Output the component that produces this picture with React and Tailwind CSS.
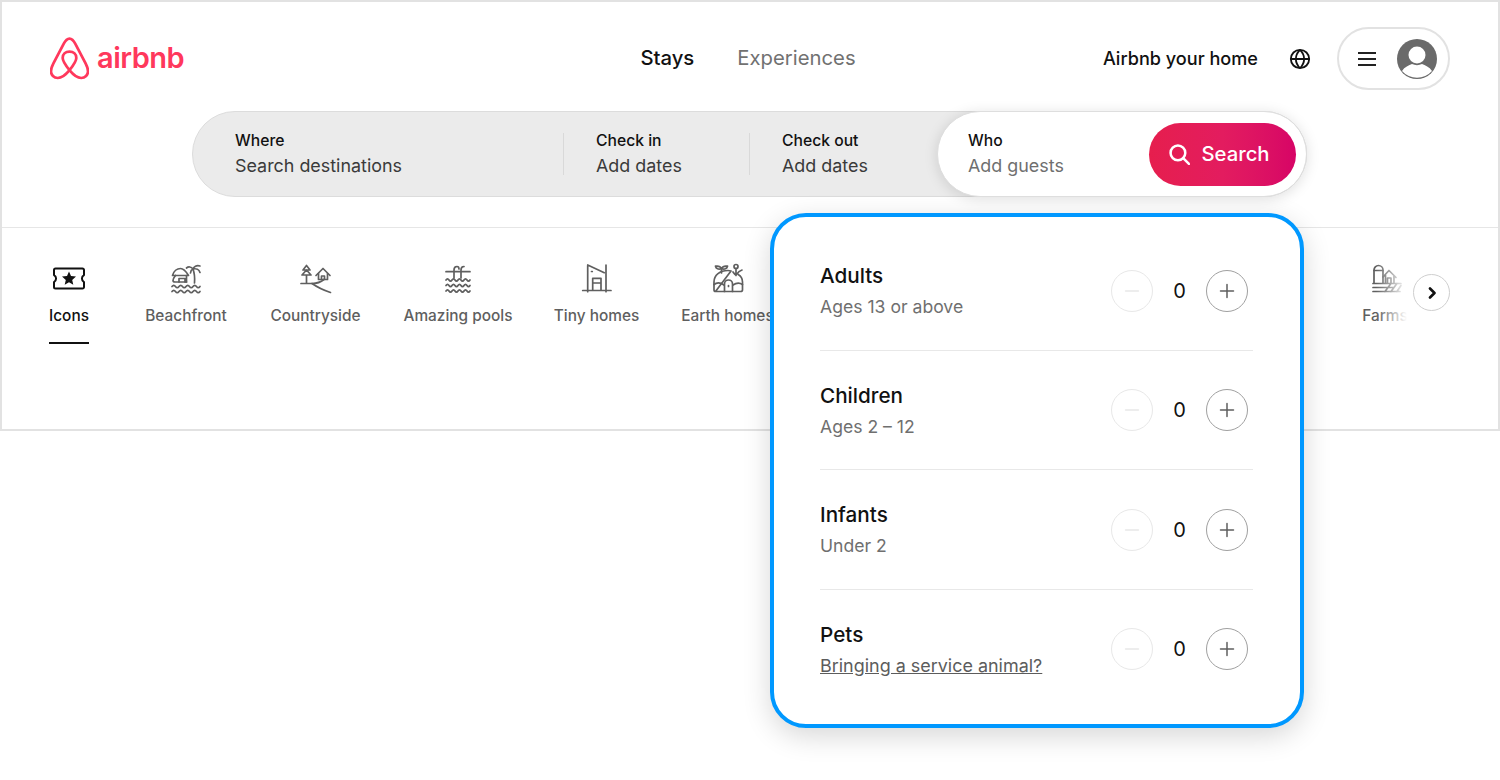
import React from "react";

const Svg = ({ children, className = "" }) => (
  <svg viewBox="0 0 32 32" fill="none" stroke="currentColor" strokeWidth="1.700" strokeLinecap="round" strokeLinejoin="round" className={`h-8 w-8 ${className}`}>
    {children}
  </svg>
);

const wave = (y, x0 = 2, n = 4, w = 7) => {
  let d = `M${x0} ${y}`;
  for (let i = 0; i < n; i++) d += ` q${w / 4} -2.400 ${w / 2} 0 t${w / 2} 0`;
  return d;
};

const Ticket = () => (
  <Svg>
    <path d="M2.500 5.500h27a1.500 1.500 0 0 1 1.500 1.500v5a4 4 0 0 0 0 7v5a1.500 1.500 0 0 1-1.500 1.500h-27A1.500 1.500 0 0 1 1 24v-5a4 4 0 0 0 0-7V7a1.500 1.500 0 0 1 1.500-1.500z" strokeWidth="2" />
    <path d="M16 8.500l2 4.600 5 .5-3.800 3.300 1.100 4.900-4.300-2.600-4.300 2.600 1.100-4.900-3.800-3.300 5-.5z" fill="currentColor" stroke="none" />
  </Svg>
);
const Beach = () => (
  <Svg>
    <path d="M2.500 12.500c1.200-4 4.500-7 8-7 2.500 0 5 2 8 7z" />
    <path d="M5.500 12.500c-1.300 2-2.500 3-2.500 5 0 1.200 1 1.500 2 1.500h11.500" />
    <path d="M9 19v-3.500h6V19M16.500 12.500V19" />
    <path d="M24.500 20c.4-5 .3-9-1.500-14" />
    <path d="M23 6c-1.800-2.400-4.600-2.600-6.500-1M23 6c.6-2.500 3.600-4 7-3M23 6c3-.8 6 .6 7 3.500M23 6c-1.300.6-2.400 2-2.500 4" />
    <path d={wave(23.500, 2, 4, 7)} />
    <path d={wave(28.500, 2, 4, 7)} />
  </Svg>
);
const Country = () => (
  <Svg>
    <path d="M6.500 2.500l-3.500 4.500h7zM6.500 7l-4.500 5h9zM6.500 12v8" />
    <path d="M16 12.500L23 5.500l7 7" />
    <path d="M18.500 10.500v6h9v-6M21.500 16.500v-3.500h3v3.500" />
    <path d="M1 20.500h11c4.500 0 9-1.500 12-4" />
    <path d="M12 20.500c5 3.500 11 6.500 18.500 9" />
  </Svg>
);
const Pool = () => (
  <Svg>
    <path d="M4 8.700h24" />
    <path d="M12 15V7c0-2 1.300-3.500 3-3.500M19 15V7c0-2 1.300-3.500 3-3.500M15 3.500c1.700 0 2 1 2 2.500" />
    <path d={wave(17, 4, 4, 6)} />
    <path d={wave(22.500, 4, 4, 6)} />
    <path d={wave(28, 4, 4, 6)} />
  </Svg>
);
const Tiny = () => (
  <Svg>
    <path d="M6.700 2v26.700M6.700 2l16.600 7.700M25 2v26.700M1.700 27.500H30" />
    <path d="M11.700 27V15.300H20V27M11.700 20H20" />
    <path d="M10.500 8.500h.8" />
  </Svg>
);
const Earth = () => (
  <Svg>
    <path d="M3.500 28.500h25c1 0 2-.8 2-1.800V19c0-3-1.700-6-4.300-7.500M19 8c-1-.3-2-.5-3-.5C8 7.500 2 12 2 19v7.700c0 1 .5 1.800 1.500 1.800z" />
    <path d="M2 21.500c3-2.500 6-2.500 10 .5M21 22c3.500-2.500 6-3 9.500-.5" />
    <path d="M12.500 28.500V21a4 4 0 0 1 8 0v7.500M16.500 22.500v1" />
    <path d="M9.500 10V5.500M9.500 5.500C8.500 3.500 6 2.800 3.500 3.200 4 5.500 6.500 7 9.500 5.500zM9.500 5.500c1-2 3.500-2.700 6-2.300-.5 2.300-3 3.800-6 2.300z" />
    <circle cx="24" cy="3.500" r="2" />
    <path d="M24 5.500v7M21 9c1 1.500 2 2.500 3 3M30 7c-2 .5-4 2-5.500 4.500" />
  </Svg>
);
const Farm = () => (
  <Svg className="ml-[4px]">
    <path d="M3 20V7c0-2.500 2-4.500 4.500-4.500S12 4.500 12 7v13" />
    <path d="M3 7.500h9M12 14l6-6.500 7 7M14.500 12v8M23 13v7M16.500 20v-5h3.500v5" />
    <path d="M2 20.500h28M2 24.500h20M2 28.500h27M14 28.500l6-8M20 28.500l6-8M26 28.500l4-6" />
  </Svg>
);

const categories = [
  { label: "Icons", Icon: Ticket, w: "w-[40px] mr-[13px]", active: true },
  { label: "Beachfront", Icon: Beach, w: "w-[83px]" },
  { label: "Countryside", Icon: Country, w: "w-[91px]" },
  { label: "Amazing pools", Icon: Pool, w: "w-[109px]" },
  { label: "Tiny homes", Icon: Tiny, w: "w-[83px]" },
  { label: "Earth homes", Icon: Earth, w: "w-[94px]" },
];

const Category = ({ label, Icon, w, active }) => (
  <div className={`flex shrink-0 flex-col items-center ${w} ${active ? "text-[#111111]" : "text-[#5f5f5f]"}`}>
    <Icon />
    <span className="mt-[11px] whitespace-nowrap text-[15.400px] font-medium leading-5">{label}</span>
    <span className={`mt-[16px] h-[2px] w-full ${active ? "bg-[#111111]" : "bg-transparent"}`} />
  </div>
);

const Segment = ({ label, value, width, pad, muted }) => (
  <div className={`flex flex-col justify-center ${width} ${pad}`}>
    <span className="text-[15.700px] font-medium leading-[22px] text-[#111111]">{label}</span>
    <span className={`mt-[1px] text-[17.900px] leading-[25px] ${muted ? "text-[#6f6f6f]" : "text-[#3a3a3a]"}`}>{value}</span>
  </div>
);

const Counter = () => (
  <div className="flex items-center pr-[5px]">
    <button className="flex h-[42px] w-[42px] items-center justify-center rounded-full border border-[#e8e8e8] bg-white">
      <svg viewBox="0 0 16 16" className="h-4 w-4" stroke="#e8e8e8" strokeWidth="1.500" strokeLinecap="round"><path d="M1.500 8h13" /></svg>
    </button>
    <span className="w-[53px] text-center text-[20px] leading-none text-[#111111]">0</span>
    <button className="flex h-[42px] w-[42px] items-center justify-center rounded-full border border-[#a0a0a0] bg-white">
      <svg viewBox="0 0 16 16" className="h-4 w-4" stroke="#5f5f5f" strokeWidth="1.500" strokeLinecap="round"><path d="M1.500 8h13M8 1.500v13" /></svg>
    </button>
  </div>
);

const guests = [
  { title: "Adults", sub: "Ages 13 or above" },
  { title: "Children", sub: "Ages 2 – 12" },
  { title: "Infants", sub: "Under 2" },
  { title: "Pets", sub: "Bringing a service animal?", link: true },
];

export default function App() {
  return (
    <div className="relative h-[780px] w-[1500px] overflow-hidden bg-white text-[#222222] [font-family:Inter,'Noto_Sans',sans-serif]">
      <div className="flex h-[431px] flex-col border-2 border-[#e2e2e2] bg-white">
        <header className="grid grid-cols-[1fr_auto_1fr] items-center pl-[48px] pr-[48px] pt-[25px]">
          <div className="flex items-center gap-[8px] text-[#ff385c]">
            <svg viewBox="0 0 40 44" className="h-[43px] w-[39px]" fill="none" stroke="currentColor" strokeWidth="2.800" strokeLinejoin="round">
              <path d="M20 34C24 39 28 42 32 42C36 42 39 39 39 35C39 32 38 30 36.500 27L26 7C24 3 22 1.500 20 1.500C18 1.500 16 3 14 7L3.500 27C2 30 1 32 1 35C1 39 4 42 8 42C12 42 16 39 20 34C24 29 27 25 27 21.500C27 17.500 24 15 20 15C16 15 13 17.500 13 21.500C13 25 16 29 20 34Z" />
            </svg>
            <span className="-mt-[2px] text-[29px] font-semibold leading-none tracking-[-0.5px]">airbnb</span>
          </div>
          <nav className="-ml-[4px] flex items-center gap-[43px] text-[20.300px]">
            <span className="font-medium text-[#111111]">Stays</span>
            <span className="text-[#717171]">Experiences</span>
          </nav>
          <div className="flex items-center justify-end">
            <span className="text-[18.100px] font-medium text-[#111111]">Airbnb your home</span>
            <svg viewBox="0 0 24 24" className="ml-[31px] h-[22px] w-[22px]" fill="none" stroke="#111111" strokeWidth="2">
              <circle cx="12" cy="12" r="10" />
              <path d="M2 12h20M12 2c-6 6-6 14 0 20M12 2c6 6 6 14 0 20" />
            </svg>
            <div className="ml-[26px] flex h-[63px] w-[113px] items-center rounded-full border-2 border-[#e2e2e2] pl-[19px]">
              <svg viewBox="0 0 18 14" className="h-[14px] w-[18px]" stroke="#222222" strokeWidth="2"><path d="M0 1h18M0 7h18M0 13h18" /></svg>
              <svg viewBox="0 0 40 40" className="ml-[21px] h-[40px] w-[40px]">
                <circle cx="20" cy="20" r="20" fill="#6a6a6a" />
                <circle cx="20" cy="16" r="8.500" fill="#ffffff" />
                <path d="M5 32c2.500-4 7-6 10-7 3 1.500 7 1.500 10 0 3 1 7.500 3 10 7a20 20 0 0 1-30 0z" fill="#ffffff" />
              </svg>
            </div>
          </div>
        </header>

        <div className="ml-[190px] mt-[21px] flex h-[86px] w-[1115px] shrink-0 rounded-full border border-[#dcdcdc] bg-[#ebebeb]">
          <Segment label="Where" value="Search destinations" width="w-[370px]" pad="pl-[42px]" />
          <span className="my-[21px] w-px bg-[#d9d9d9]" />
          <Segment label="Check in" value="Add dates" width="w-[185px]" pad="pl-[32px]" />
          <span className="my-[21px] w-px bg-[#d9d9d9]" />
          <Segment label="Check out" value="Add dates" width="w-[187px]" pad="pl-[32px]" />
          <div className="z-10 -my-px -mr-px flex flex-1 items-center rounded-full border border-[#dedede] bg-white pl-[30px] pr-[10px] shadow-[0_2px_14px_rgba(0,0,0,0.13)]">
            <Segment label="Who" value="Add guests" width="flex-1" pad="" muted />
            <button className="flex h-[63px] w-[147px] items-center justify-center gap-[11px] rounded-full bg-gradient-to-r from-[#e61e4d] via-[#e31c5f] to-[#d70466] pr-[6px] text-[20.300px] font-medium text-white">
              <svg viewBox="0 0 20 20" className="h-[21px] w-[21px]" fill="none" stroke="#ffffff" strokeWidth="2.400" strokeLinecap="round">
                <circle cx="8.500" cy="8.500" r="7" />
                <path d="M13.500 13.500L19 19" />
              </svg>
              Search
            </button>
          </div>
        </div>

        <div className="relative mt-[30px] flex flex-1 items-start gap-[42.500px] overflow-hidden border-t border-[#e6e6e6] pl-[47px] pt-[35px]">
          {categories.map((c) => (
            <Category key={c.label} {...c} />
          ))}
          <div className="ml-auto mr-[91px] flex w-[44px] shrink-0 flex-col items-center text-[#5f5f5f]">
            <Farm />
            <span className="mt-[11px] text-[15.400px] font-medium leading-5">Farms</span>
          </div>
          <div className="absolute right-[48px] top-[35px] h-[64px] w-[74px] bg-gradient-to-r from-transparent to-white to-[42%]" />
          <button className="absolute right-[48px] top-[46px] flex h-[37px] w-[37px] items-center justify-center rounded-full border border-[#cfcfcf] bg-white">
            <svg viewBox="0 0 12 12" className="h-3 w-3" fill="none" stroke="#111111" strokeWidth="2.600" strokeLinecap="round" strokeLinejoin="round"><path d="M4 1.500L8.500 6 4 10.500" /></svg>
          </button>
        </div>
      </div>

      <div className="absolute left-[770px] top-[213px] flex h-[515px] w-[534px] flex-col rounded-[36px] border-4 border-[#0098ff] bg-white pl-[46px] pr-[47px] pt-[14px] shadow-[0_8px_28px_rgba(0,0,0,0.16)]">
        {guests.map((g, i) => (
          <div key={g.title} className={`flex h-[119.500px] shrink-0 items-center justify-between ${i < 3 ? "border-b border-[#e8e8e8] pt-[1px]" : ""}`}>
            <div className={`flex flex-col ${i < 3 ? "pt-[3px]" : "pt-[3px]"}`}>
              <span className="text-[20.700px] font-medium leading-[28px] text-[#111111]">{g.title}</span>
              <span className={`mt-[2px] leading-[30px] ${g.link ? "text-[17.950px] text-[#5c5c5c] underline" : "text-[17.600px] text-[#6f6f6f]"}`}>{g.sub}</span>
            </div>
            <Counter />
          </div>
        ))}
      </div>
    </div>
  );
}
